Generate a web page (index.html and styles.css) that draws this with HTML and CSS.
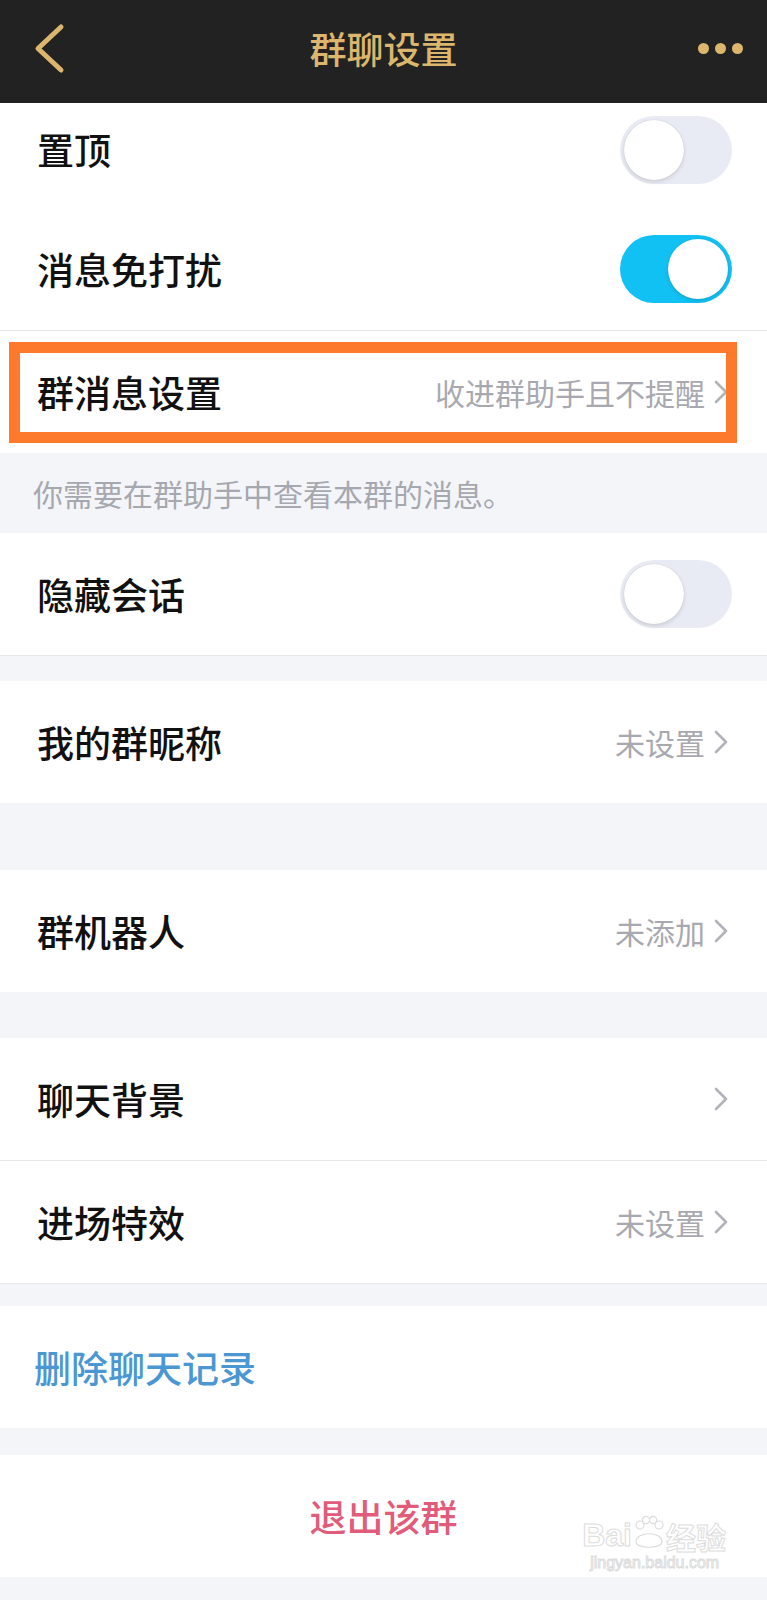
FILE: index.html
```html
<!DOCTYPE html>
<html>

<head>
    <title>群聊设置</title>
    <link rel="stylesheet" href="styles.css">
</head>

<body>
    <header class="nav">
        <div class="nav-left">
            <svg class="back" width="32" height="52" viewBox="0 0 32 52">
                <path d="M27 4 L4 25.5 L27 47" />
            </svg>
        </div>
        <h1 class="nav-title">群聊设置</h1>
        <div class="nav-right">
            <span class="dot"></span>
            <span class="dot"></span>
            <span class="dot"></span>
        </div>
    </header>

    <section class="group">
        <div class="cell first">
            <span class="label">置顶</span>
            <span class="switch"></span>
        </div>
        <div class="cell line">
            <span class="label">消息免打扰</span>
            <span class="switch on"></span>
        </div>
        <div class="cell marked">
            <span class="label">群消息设置</span>
            <span class="value">收进群助手且不提醒
                <svg class="arrow" width="14" height="24" viewBox="0 0 14 24"><path d="M2 2 L12 12 L2 22" /></svg>
            </span>
            <div class="highlight"></div>
        </div>
    </section>

    <p class="note">你需要在群助手中查看本群的消息。</p>

    <section class="group">
        <div class="cell line">
            <span class="label">隐藏会话</span>
            <span class="switch"></span>
        </div>
    </section>

    <section class="group gap-s">
        <div class="cell">
            <span class="label">我的群昵称</span>
            <span class="value">未设置
                <svg class="arrow" width="14" height="24" viewBox="0 0 14 24"><path d="M2 2 L12 12 L2 22" /></svg>
            </span>
        </div>
    </section>

    <section class="group gap-l">
        <div class="cell">
            <span class="label">群机器人</span>
            <span class="value">未添加
                <svg class="arrow" width="14" height="24" viewBox="0 0 14 24"><path d="M2 2 L12 12 L2 22" /></svg>
            </span>
        </div>
    </section>

    <section class="group gap-m">
        <div class="cell line">
            <span class="label">聊天背景</span>
            <span class="value">
                <svg class="arrow" width="14" height="24" viewBox="0 0 14 24"><path d="M2 2 L12 12 L2 22" /></svg>
            </span>
        </div>
        <div class="cell line">
            <span class="label">进场特效</span>
            <span class="value">未设置
                <svg class="arrow" width="14" height="24" viewBox="0 0 14 24"><path d="M2 2 L12 12 L2 22" /></svg>
            </span>
        </div>
    </section>

    <section class="group gap-xs">
        <div class="cell">
            <span class="label blue">删除聊天记录</span>
        </div>
    </section>

    <section class="group gap-xs2">
        <div class="cell exit">
            <span class="label red">退出该群</span>
            <div class="watermark">
                <div class="wm-top">
                    <span>Bai</span>
                    <svg class="paw" width="34" height="36" viewBox="0 0 34 34">
                        <circle cx="8" cy="9" r="4" />
                        <circle cx="14" cy="4" r="3.6" />
                        <circle cx="21" cy="4" r="3.6" />
                        <circle cx="27" cy="9" r="4" />
                        <path d="M4 26 C4 15 30 15 30 26 C30 33 4 33 4 26 Z" />
                    </svg>
                    <span>经验</span>
                </div>
                <div class="wm-bottom">jingyan.baidu.com</div>
            </div>
        </div>
    </section>
</body>

</html>
```

FILE: styles.css
```css
body {
    margin: 0;
    background-color: #f4f5f9;
    font-family: "Noto Sans CJK SC", "Noto Sans", sans-serif;
    min-height: 1600px;
}

.nav {
    display: grid;
    grid-template-columns: 1fr auto 1fr;
    align-items: center;
    height: 103px;
    padding: 0 24px 6px 24px;
    box-sizing: border-box;
    background-color: #222222;
}

.nav-left {
    display: flex;
    align-items: center;
}

.back {
    margin-left: 10px;
    fill: none;
    stroke: #dbb66c;
    stroke-width: 5;
    stroke-linecap: round;
    stroke-linejoin: round;
}

.nav-title {
    margin: 0;
    font-size: 37px;
    font-weight: 500;
    line-height: 1;
    color: #dbb66c;
}

.nav-right {
    display: flex;
    justify-content: flex-end;
    gap: 6px;
}

.dot {
    width: 11px;
    height: 11px;
    border-radius: 50%;
    background-color: #dbb66c;
}

.group {
    background-color: #fff;
}

.gap-s {
    margin-top: 25px;
}

.gap-l {
    margin-top: 67px;
}

.gap-m {
    margin-top: 46px;
}

.gap-xs {
    margin-top: 22px;
}

.gap-xs2 {
    margin-top: 27px;
}

.cell {
    display: flex;
    align-items: center;
    justify-content: space-between;
    height: 122px;
    padding: 0 35px 0 37px;
    position: relative;
}

.cell.first {
    height: 93px;
    padding-bottom: 12px;
}

.cell.line {
    border-bottom: 1px solid #e7e7ea;
}

.cell.exit {
    justify-content: center;
    padding: 0;
}

.label {
    font-size: 37px;
    font-weight: 500;
    line-height: 1;
    color: #111111;
}

.label.blue {
    margin-left: -3px;
    color: #4b97d3;
}

.label.red {
    color: #e05c7a;
}

.value {
    display: flex;
    align-items: center;
    gap: 9px;
    margin-right: 4px;
    font-size: 30px;
    line-height: 1;
    color: #a8a9b0;
}

.arrow {
    fill: none;
    stroke: #b2b3ba;
    stroke-width: 2.6;
    stroke-linecap: round;
    stroke-linejoin: round;
}

.switch {
    flex: none;
    position: relative;
    width: 112px;
    height: 68px;
    border-radius: 34px;
    background-color: #e9ebf4;
}

.switch::after {
    content: "";
    position: absolute;
    top: 4px;
    left: 4px;
    width: 60px;
    height: 60px;
    border-radius: 50%;
    background-color: #fff;
    box-shadow: 0 2px 4px rgba(0, 0, 0, 0.12), 0 0 1px rgba(0, 0, 0, 0.18);
}

.switch.on {
    background-color: #12c1f4;
}

.switch.on::after {
    left: auto;
    right: 4px;
}

.highlight {
    position: absolute;
    top: 11px;
    left: 9px;
    width: 706px;
    height: 79px;
    border: 11px solid #fd7a2c;
}

.note {
    display: flex;
    align-items: center;
    height: 80px;
    margin: 0;
    padding-left: 33px;
    font-size: 30px;
    line-height: 1;
    color: #a6a8af;
}

.watermark {
    position: absolute;
    top: 60px;
    right: 41px;
    font-family: "Liberation Sans", Arial, sans-serif;
    color: #fff;
    -webkit-text-stroke: 1px #dcdcdc;
}

.wm-top {
    display: flex;
    align-items: flex-end;
    font-size: 32px;
    font-weight: bold;
    line-height: 1;
}

.wm-top span:last-child {
    font-family: "Noto Sans CJK SC", sans-serif;
    font-size: 30px;
}

.paw {
    fill: #fff;
    stroke: #dcdcdc;
    stroke-width: 1.2;
}

.wm-bottom {
    margin-top: 4px;
    padding-left: 8px;
    font-size: 16px;
    line-height: 1;
}
```
